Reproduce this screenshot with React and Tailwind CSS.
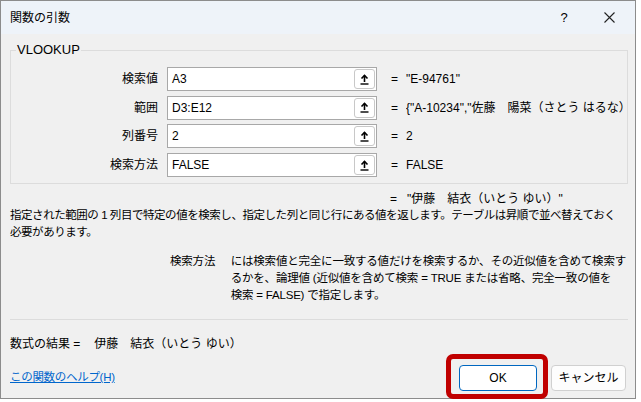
import React from "react";

const font = { fontFamily: "'Liberation Sans','Noto Sans CJK JP',sans-serif" };

function RefIcon() {
  return (
    <svg width="9" height="11" viewBox="0 0 9 11" fill="none">
      <path d="M4.5 1.5 L4.5 8" stroke="#000" strokeWidth="1.6" />
      <path d="M1.5 4.5 L4.5 1.5 L7.5 4.5" stroke="#000" strokeWidth="1.6" />
      <path d="M0.5 10 L8.5 10" stroke="#000" strokeWidth="1.4" />
    </svg>
  );
}

function ArgRow({ label, value, result }) {
  return (
    <div className="flex h-[24px] items-center">
      <div className="w-[147px] text-right">{label}</div>
      <div className="ml-[9px] flex h-[24px] w-[210px] items-center border border-[#a8a8a8] bg-white">
        <div className="flex-1 pl-[4px]">{value}</div>
        <div className="mr-[1px] flex h-[20px] w-[21px] items-center justify-center rounded-[3px] border border-[#c8c8c8] bg-white">
          <RefIcon />
        </div>
      </div>
      <div className="ml-[14px] w-[15px] shrink-0">=</div>
      <div className="min-w-0 flex-1 overflow-hidden whitespace-nowrap pr-[10px]">{result}</div>
    </div>
  );
}

export default function App() {
  return (
    <div className="relative h-[402px] w-[641px] bg-white text-[12px] text-black" style={font}>
      <div className="flex h-[399px] w-[636px] flex-col border border-[#8c8c8c] bg-[#f0f0f0]">
        {/* title bar */}
        <div className="flex h-[33px] shrink-0 items-center bg-[#eef3f9] pl-[9px]">
          <div className="flex-1 text-[12px]">関数の引数</div>
          <div className="mr-[5px] w-[40px] text-center text-[13px]">?</div>
          <div className="mr-[6px] flex w-[40px] justify-center">
            <svg width="11" height="11" viewBox="0 0 11 11">
              <path d="M0.5 0.5 L10.5 10.5 M10.5 0.5 L0.5 10.5" stroke="#222" strokeWidth="1.1" />
            </svg>
          </div>
        </div>

        <div className="flex flex-1 flex-col px-[9px] pt-[16px]">
          {/* group box */}
          <div className="relative h-[134px] w-[618px] shrink-0 border border-[#dcdcdc]">
            <div className="absolute -top-[9px] left-[5px] bg-[#f0f0f0] px-[1px] text-[13px] leading-[16px]">VLOOKUP</div>
            <div className="flex flex-col gap-[4.7px] pt-[16px]">
              <ArgRow label="検索値" value="A3" result={'"E-94761"'} />
              <ArgRow
                label="範囲"
                value="D3:E12"
                result={'{"A-10234","佐藤　陽菜（さとう はるな）";"B-20481","高橋 蓮（たかはし れん）"}'}
              />
              <ArgRow label="列番号" value="2" result="2" />
              <ArgRow label="検索方法" value="FALSE" result="FALSE" />
            </div>
          </div>

          <div className="mt-[6px] flex h-[17px] items-center pl-[380px]">
            <span className="w-[17px]">=</span>
            <span>"伊藤　結衣（いとう ゆい）"</span>
          </div>

          <div className="whitespace-nowrap text-[11.5px] leading-[17px] tracking-[-0.45px]">
            <div>指定された範囲の 1 列目で特定の値を検索し、指定した列と同じ行にある値を返します。テーブルは昇順で並べ替えておく</div>
            <div>必要があります。</div>
          </div>

          <div className="mt-[12px] flex text-[11.5px] leading-[17px] tracking-[-0.2px]">
            <div className="w-[221px] pl-[160px] whitespace-nowrap">検索方法</div>
            <div className="whitespace-nowrap">
              <div>には検索値と完全に一致する値だけを検索するか、その近似値を含めて検索す</div>
              <div>るかを、論理値 (近似値を含めて検索 = TRUE または省略、完全一致の値を</div>
              <div>検索 = FALSE) で指定します。</div>
            </div>
          </div>

          <div className="mt-[15px] h-px w-[618px] bg-[#dcdcdc]" />

          <div className="mt-[15px] flex h-[17px] items-center">
            <span>数式の結果 =</span>
            <span className="ml-[14px]">伊藤　結衣（いとう ゆい）</span>
          </div>

          <div className="mt-[13px] flex items-center">
            <a className="flex-1 text-[11.5px] tracking-[-0.3px] text-[#0066cc] underline">この関数のヘルプ(H)</a>
            <button className="flex h-[26px] w-[78px] items-center justify-center rounded-[4px] border border-[#0067c0] bg-white">
              OK
            </button>
            <button className="ml-[14px] flex h-[26px] w-[75px] items-center justify-center rounded-[4px] border border-[#d0d0d0] bg-[#fdfdfd]">
              キャンセル
            </button>
          </div>
        </div>
      </div>

      {/* red highlight annotation */}
      <div className="pointer-events-none absolute left-[446px] top-[354px] h-[45px] w-[102px] rounded-[7px] border-[5px] border-[#c00000]" />
    </div>
  );
}
